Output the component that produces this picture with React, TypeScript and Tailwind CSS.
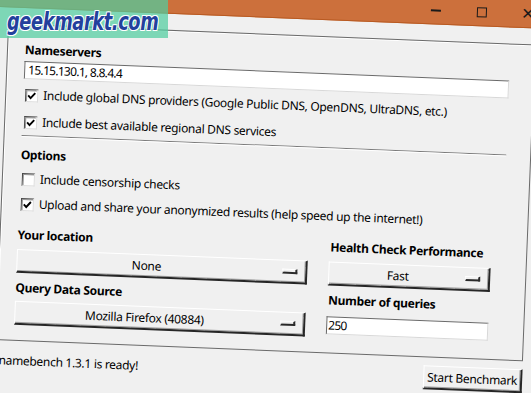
import React from "react";

const Check = ({ checked }: { checked: boolean }) => (
  <span className="w-[13px] h-[13px] shrink-0 bg-white border border-t-[#4a4a4a] border-l-[#4a4a4a] border-b-[#dcdcdc] border-r-[#dcdcdc] shadow-[inset_1px_1px_0_#9a9a9a] flex items-center justify-center">
    {checked && (
      <svg width="9" height="9" viewBox="0 0 9 9">
        <path d="M1 4.2 L3.5 6.8 L8 1.6" stroke="#000" strokeWidth="1.9" fill="none" />
      </svg>
    )}
  </span>
);

const CheckRow = ({ checked, label, className }: { checked: boolean; label: string; className: string }) => (
  <div className={"flex items-center h-[16px] " + className}>
    <span className="ml-[2px]">
      <Check checked={checked} />
    </span>
    <span className="ml-[5px] leading-[16px] whitespace-nowrap">{label}</span>
  </div>
);

const Menu = ({ label, className, textClass }: { label: string; className: string; textClass: string }) => (
  <div
    className={
      "h-[24px] flex items-center bg-[#f0f0f0] border-t border-l border-t-white border-l-white border-b-2 border-r-2 border-b-[#262626] border-r-[#262626] shadow-[inset_-1px_-1px_0_#a0a0a0] " +
      className
    }
  >
    <span className={"flex-1 text-center leading-[16px] whitespace-nowrap " + textClass}>{label}</span>
    <span className="w-[15px] h-[5px] mr-[8px] ml-[7px] border-t border-l border-t-white border-l-white border-b-2 border-r-2 border-b-[#2a2a2a] border-r-[#2a2a2a]" />
  </div>
);

export default function App() {
  return (
    <div className="w-[531px] h-[393px] overflow-hidden relative bg-[#f0f0f0] font-['Noto_Sans',sans-serif] text-[12px] tracking-[-0.3px] text-black">
      <div className="w-[560px] h-[440px] -mt-[30px] rotate-[2.3deg] origin-[0_30px] flex flex-col">
        {/* title bar */}
        <div className="h-[37px] shrink-0 bg-[#cc703c] border-b border-b-[#b85a22] flex justify-end items-center pt-[10px] pr-[9px]">
          <div className="w-[46px] flex justify-center">
            <span className="w-[10px] h-[2px] bg-[#1a1a1a]" />
          </div>
          <div className="w-[46px] flex justify-center">
            <span className="w-[10px] h-[10px] border-[1.5px] border-[#1a1a1a]" />
          </div>
          <div className="w-[46px] h-[14px] flex justify-center items-center">
            <span className="text-[16px] leading-[14px] text-[#1a1a1a] font-['DejaVu_Sans',sans-serif]">✕</span>
          </div>
        </div>

        {/* frame */}
        <div className="ml-[9px] mt-[16px] w-[528px] h-[317px] shrink-0 border border-[#6a6a6a] shadow-[inset_1px_1px_0_#ffffff] pt-[17px] pl-[17px] flex flex-col">
          <div className="font-bold leading-[16px]">Nameservers</div>
          <div className="mt-[3px] w-[485px] h-[18px] bg-white border border-t-[#6a6a6a] border-l-[#6a6a6a] border-b-[#d8d8d8] border-r-[#d8d8d8] pl-[3px] leading-[16px] tracking-[-0.7px]">
            15.15.130.1, 8.8.4.4
          </div>
          <CheckRow
            className="mt-[8px]"
            checked={true}
            label="Include global DNS providers (Google Public DNS, OpenDNS, UltraDNS, etc.)"
          />
          <CheckRow className="mt-[11px]" checked={true} label="Include best available regional DNS services" />
          <div className="mt-[5px] w-[485px] h-[2px] border-t border-t-[#7a7a7a] border-b border-b-white" />
          <div className="mt-[10px] font-bold leading-[16px]">Options</div>
          <CheckRow className="mt-[8px]" checked={false} label="Include censorship checks" />
          <CheckRow
            className="mt-[9px]"
            checked={true}
            label="Upload and share your anonymized results (help speed up the internet!)"
          />
          <div className="mt-[15px] flex">
            <div className="w-[291px] flex flex-col">
              <div className="font-bold leading-[16px]">Your location</div>
              <Menu className="mt-[6px]" label="None" textClass="" />
              <div className="mt-[7px] font-bold leading-[16px]">Query Data Source</div>
              <Menu className="mt-[5px]" label="Mozilla Firefox (40884)" textClass="" />
            </div>
            <div className="ml-[21px] w-[162px] flex flex-col">
              <div className="font-bold leading-[16px] pl-[1px] whitespace-nowrap">Health Check Performance</div>
              <Menu className="mt-[6px]" label="Fast" textClass="pl-[8px]" />
              <div className="mt-[7px] font-bold leading-[16px] pl-[1px]">Number of queries</div>
              <div className="mt-[8px] h-[18px] bg-white border border-t-[#6a6a6a] border-l-[#6a6a6a] border-b-[#d8d8d8] border-r-[#d8d8d8] pl-[1px] leading-[16px] tracking-[-0.7px]">
                250
              </div>
            </div>
          </div>
        </div>

        {/* status row */}
        <div className="ml-[9px] mt-[8px] w-[528px] h-[24px] flex items-center justify-between">
          <span className="pl-[4px] leading-[16px]">namebench 1.3.1 is ready!</span>
          <div className="h-[24px] w-[99px] flex items-center justify-center bg-[#f0f0f0] border-t border-l border-t-white border-l-white border-b-2 border-r-2 border-b-[#262626] border-r-[#262626] shadow-[inset_-1px_-1px_0_#a0a0a0] leading-[16px] whitespace-nowrap">
            Start Benchmark
          </div>
        </div>
      </div>

      {/* watermark */}
      <div className="absolute left-0 top-0 w-[168px] h-[38px] bg-[rgba(80,205,160,0.72)] flex items-center pl-[7px] pt-[5px] overflow-hidden">
        <span className="block shrink-0 origin-left scale-x-[0.74] font-['DejaVu_Sans',sans-serif] font-bold italic text-[24px] leading-[28px] text-[#23409c] tracking-[-0.5px] whitespace-nowrap [text-shadow:1px_1px_0_#fff,-1px_-1px_0_#fff,1px_-1px_0_#fff,-1px_1px_0_#fff]">
          geekmarkt.com
        </span>
      </div>
    </div>
  );
}
